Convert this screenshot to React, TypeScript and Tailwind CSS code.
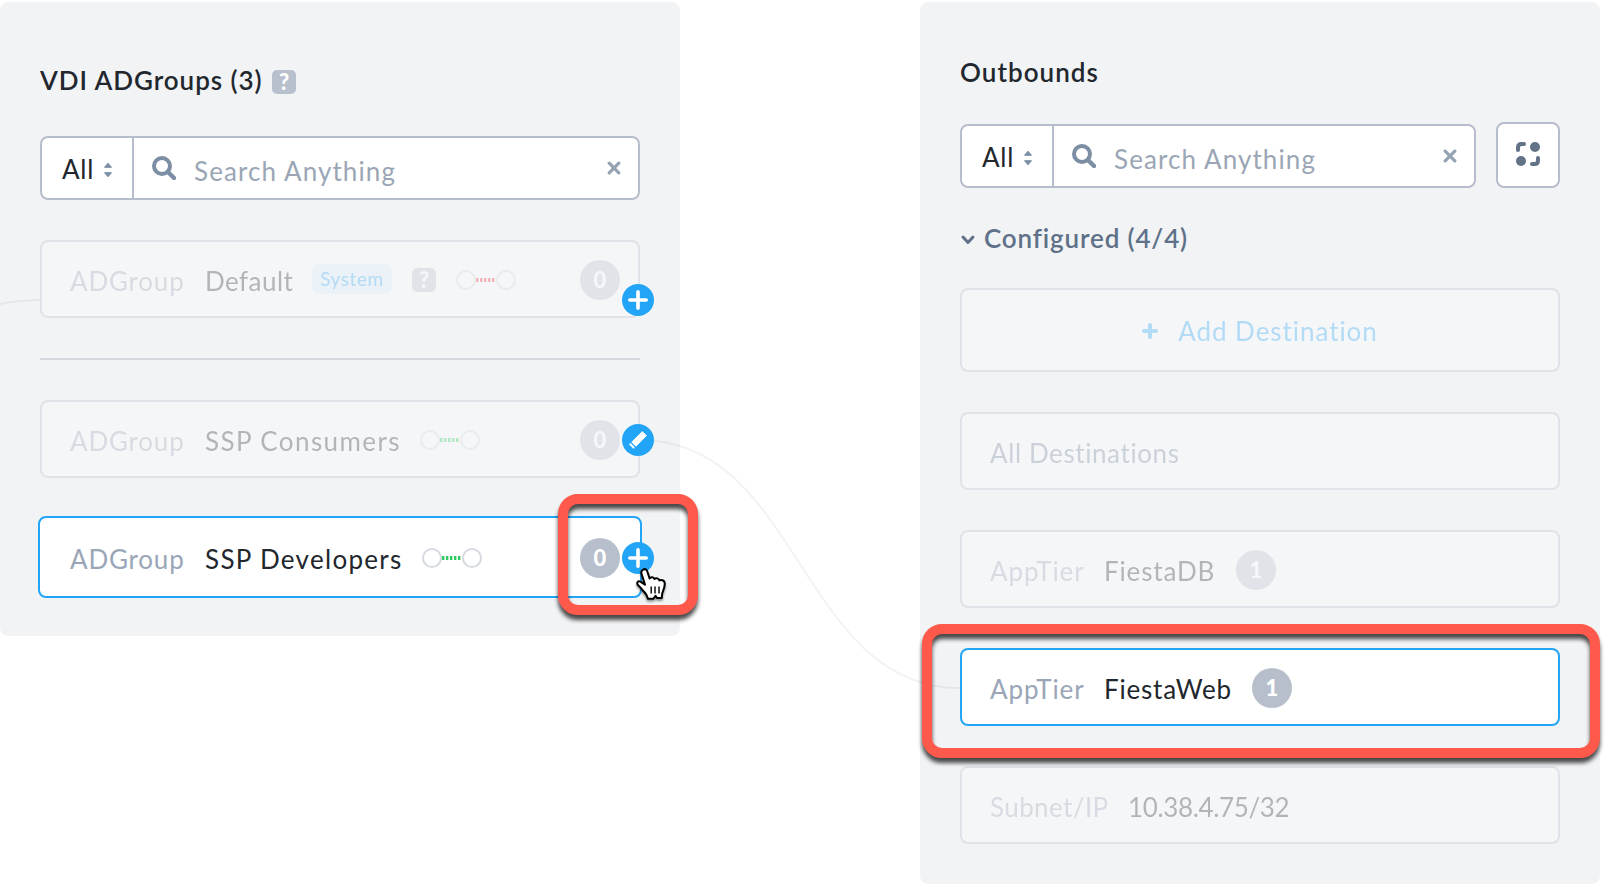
import React from "react";

const faded = "opacity-30";

function Help({ className = "" }: { className?: string }) {
  return (
    <span className={`flex h-6 w-6 shrink-0 items-center justify-center rounded-[5px] bg-[#b8bfcd] text-[22px] leading-none font-black text-white ${className}`}>
      ?
    </span>
  );
}

function Link({ color }: { color: string }) {
  return (
    <svg width="60" height="20" viewBox="0 0 60 20" className="shrink-0" fill="none">
      <circle cx="10" cy="10" r="9" stroke="#d5dae0" strokeWidth="2" />
      <circle cx="50" cy="10" r="9" stroke="#d5dae0" strokeWidth="2" />
      <path d="M20 10H39" stroke={color} strokeWidth="4" strokeDasharray="2.4 1.6" />
    </svg>
  );
}

function Count({ value, className = "" }: { value: number; className?: string }) {
  return (
    <span className={`flex h-10 w-10 shrink-0 items-center justify-center rounded-full bg-[#b8bfcc] text-[22px] leading-none font-black text-white ${className}`}>
      {value}
    </span>
  );
}

function Plus({ className }: { className: string }) {
  return (
    <svg width="32" height="32" viewBox="0 0 32 32" className={`absolute ${className}`}>
      <circle cx="16" cy="16" r="16" fill="#22a5f7" />
      <path d="M16 7.8V24.2M7.8 16H24.2" stroke="#fff" strokeWidth="3.6" strokeLinecap="round" />
    </svg>
  );
}

function Pencil({ className }: { className: string }) {
  return (
    <svg width="32" height="32" viewBox="0 0 32 32" className={`absolute ${className}`}>
      <circle cx="16" cy="16" r="16" fill="#22a5f7" />
      <path d="M20.3 7.6L24.4 11.7L13.9 22.2L9.8 18.1Z" fill="#fff" stroke="#fff" strokeWidth="1" strokeLinejoin="round" />
      <path d="M8.3 20.3L11.6 23.6" stroke="#fff" strokeWidth="2" strokeLinecap="round" />
    </svg>
  );
}

function Search({ className }: { className: string }) {
  return (
    <div className={`flex h-16 rounded-lg border-2 border-[#b6becd] bg-white ${className}`}>
      <div className="flex w-[92px] shrink-0 items-center border-r-2 border-[#b6becd] pt-px pl-5 text-[26px] leading-8 text-[#22272e]">
        <span className="w-[33px] tracking-[0.8px]">All</span>
        <svg width="10" height="16" viewBox="0 0 10 16" className="ml-2 mt-0.5" fill="#7b8ea3" stroke="#7b8ea3" strokeWidth="1" strokeLinejoin="round">
          <path d="M5 1.2L8.5 5.3H1.5Z" />
          <path d="M5 14.8L8.5 10.7H1.5Z" />
        </svg>
      </div>
      <div className="flex grow items-center pl-[18px] pr-[17px]">
        <svg width="24" height="24" viewBox="0 0 24 24" fill="none" stroke="#7b8ea3" strokeLinecap="round">
          <circle cx="10" cy="10" r="8" strokeWidth="4" />
          <path d="M16 16L22 22" strokeWidth="4.4" />
        </svg>
        <span className="mt-[5px] ml-[18px] text-[26px] leading-8 tracking-[1.1px] text-[#9aa6b5]">Search Anything</span>
        <svg width="14" height="14" viewBox="0 0 14 14" className="ml-auto" stroke="#95a2b2" strokeWidth="3.2" strokeLinecap="round">
          <path d="M2.2 2.2L11.8 11.8M11.8 2.2L2.2 11.8" />
        </svg>
      </div>
    </div>
  );
}

function Kind({ children, className }: { children: string; className: string }) {
  return <span className={`mt-0.5 shrink-0 whitespace-nowrap text-[26px] leading-8 ${className}`}>{children}</span>;
}

function Name({ children, className }: { children: string; className: string }) {
  return <span className={`mt-0.5 shrink-0 whitespace-nowrap text-[26px] leading-8 text-[#22272e] ${className}`}>{children}</span>;
}

const mutedCard = "flex h-[78px] items-center rounded-lg border-2 border-[#b6becd] bg-white pt-0.5 pl-7 pr-[18px]";
const activeCard = "flex items-center rounded-lg border-2 border-[#22a5f7] bg-white pt-0.5";

function Cursor() {
  return (
    <svg width="32" height="34" viewBox="0 0 32 34" className="absolute left-[635px] top-[567px] drop-shadow-[0_2px_1px_rgba(0,0,0,0.4)]">
      <path
        d="M8.2 2.6C10.2 1.4 11.8 2.6 12.5 5L14.6 11.5C15.8 9.8 18.6 10 19.4 12C21.2 10.6 23.6 11.2 24.4 13.4C27 12.4 29.8 13.6 29.8 16.6C29.8 21 28 23.8 27.2 26.5L26.8 31H22L20.6 28.8L18.2 31.8H13L11.2 27.4C8.6 24.4 6.2 21.2 3.4 18.6C1 16 2.8 13.6 5.4 14.6L10 17.6L6.6 7C5.8 4.8 6.4 3.4 8.2 2.6Z"
        fill="#fff"
        stroke="#000"
        strokeWidth="2"
        strokeLinejoin="round"
      />
      <path d="M16.2 19.5V26.5M20 19.5V26.5M24 19.5V26.5" stroke="#000" strokeWidth="1.4" />
    </svg>
  );
}

export default function App() {
  return (
    <div className="relative flex h-[886px] w-[1620px] items-start justify-between overflow-hidden bg-white pt-0.5 pr-5 font-['Lato',sans-serif]">
      <section className="h-[634px] w-[680px] rounded-lg bg-[#f2f3f5] px-10 pt-[62px]">
        <h2 className="flex h-8 items-center text-[26px] leading-8 font-semibold text-[#22272e]">
          <span className="w-[232px] tracking-[0.95px] whitespace-nowrap">VDI ADGroups (3)</span>
          <Help className="mt-1" />
        </h2>
        <Search className="mt-10" />
        <div className={`mt-10 ${mutedCard} ${faded}`}>
          <Kind className="w-[135px] tracking-[0.8px] text-[#9aa6b7]">ADGroup</Kind>
          <Name className="w-[107px] tracking-[0.45px]">Default</Name>
          <span className="mr-5 mb-0.5 flex h-[30px] w-20 items-center justify-center rounded-lg bg-[#d9effe] text-[19px] tracking-[0.6px] text-[#22a5f7]">System</span>
          <Help className="mr-5" />
          <Link color="#f5302d" />
          <Count value={0} className="ml-auto" />
        </div>
        <hr className="mt-10 border-0 border-t-2 border-[#d3d9df]" />
        <div className={`mt-10 ${mutedCard} ${faded}`}>
          <Kind className="w-[135px] tracking-[0.8px] text-[#9aa6b7]">ADGroup</Kind>
          <Name className="w-[215px] tracking-[1.4px]">SSP Consumers</Name>
          <Link color="#1fcc53" />
          <Count value={0} className="ml-auto" />
        </div>
        <div className={`-mx-0.5 mt-[38px] h-[82px] pl-[30px] pr-5 ${activeCard}`}>
          <Kind className="w-[135px] tracking-[0.8px] text-[#9aa6b7]">ADGroup</Kind>
          <Name className="w-[217px] tracking-[1.3px]">SSP Developers</Name>
          <Link color="#2fcc63" />
          <Count value={0} className="ml-auto" />
        </div>
      </section>

      <section className="h-[882px] w-[680px] rounded-lg bg-[#f2f3f5] px-10 pt-[54px]">
        <h2 className="h-8 text-[26px] leading-8 font-semibold tracking-[1.05px] text-[#22272e]">Outbounds</h2>
        <div className="mt-[34px] flex items-end gap-5">
          <Search className="w-[516px]" />
          <button className="flex h-[66px] w-16 items-center justify-center rounded-lg border-2 border-[#b6becd] bg-white pb-0.5">
            <svg width="24" height="24" viewBox="0 0 24 24" fill="none" stroke="#627388" strokeWidth="4">
              <path d="M2 8V5.5Q2 2 5.5 2H8M22 16V18.5Q22 22 18.5 22H16" strokeLinecap="round" />
              <circle cx="19" cy="5" r="5" fill="#627388" stroke="none" />
              <circle cx="5" cy="19" r="5" fill="#627388" stroke="none" />
            </svg>
          </button>
        </div>
        <h3 className="mt-[34px] flex h-8 items-center text-[26px] leading-8 font-semibold tracking-[0.85px] text-[#5f7188]">
          <svg width="16" height="12" viewBox="0 0 16 12" className="mr-2 mt-1" fill="none" stroke="#5f7188" strokeWidth="3" strokeLinecap="round" strokeLinejoin="round">
            <path d="M3 3L8 8.5L13 3" />
          </svg>
          Configured (4/4)
        </h3>
        <div className={`mt-[34px] flex h-[84px] items-center justify-center rounded-lg border-2 border-[#b6becd] bg-white pt-0.5 ${faded}`}>
          <svg width="16" height="16" viewBox="0 0 16 16" className="mr-5" stroke="#22a5f7" strokeWidth="4" strokeLinecap="round">
            <path d="M8 2V14M2 8H14" />
          </svg>
          <span className="text-[26px] leading-8 tracking-[0.95px] text-[#22a5f7]">Add Destination</span>
        </div>
        <div className={`mt-10 ${mutedCard} ${faded}`}>
          <Kind className="tracking-[0.6px] text-[#74869c]">All Destinations</Kind>
        </div>
        <div className={`mt-10 ${mutedCard} ${faded}`}>
          <Kind className="w-[114px] tracking-[0.9px] text-[#9aa6b7]">AppTier</Kind>
          <Name className="w-[132px] tracking-[0.85px]">FiestaDB</Name>
          <Count value={1} />
        </div>
        <div className={`mt-10 h-[78px] pl-7 ${activeCard}`}>
          <Kind className="w-[114px] tracking-[0.9px] text-[#9aa6b7]">AppTier</Kind>
          <Name className="w-[148px] tracking-[0.8px]">FiestaWeb</Name>
          <Count value={1} />
        </div>
        <div className={`mt-10 ${mutedCard} ${faded}`}>
          <Kind className="w-[138px] tracking-[0.4px] text-[#9aa6b7]">Subnet/IP</Kind>
          <Name className="tracking-[-0.35px]">10.38.4.75/32</Name>
        </div>
      </section>

      <svg width="1620" height="886" viewBox="0 0 1620 886" className="pointer-events-none absolute inset-0" fill="none" stroke="#000" strokeOpacity="0.05" strokeWidth="2">
        <path d="M0 304Q14 300.5 40 300" />
        <path d="M640 440C800 440 800 688 960 688" />
      </svg>
      <Plus className="left-[622px] top-[284px]" />
      <Pencil className="left-[622px] top-[424px]" />
      <Plus className="left-[622px] top-[542px]" />
      <div className="absolute left-[558px] top-[494px] h-[121px] w-[140px] rounded-[20px] border-[10px] border-[#ff594c] drop-shadow-[0_5px_2px_rgba(0,0,0,0.7)]" />
      <div className="absolute left-[922px] top-[624px] h-[134px] w-[678px] rounded-[20px] border-[10px] border-[#ff594c] drop-shadow-[0_5px_2px_rgba(0,0,0,0.7)]" />
      <Cursor />
    </div>
  );
}
